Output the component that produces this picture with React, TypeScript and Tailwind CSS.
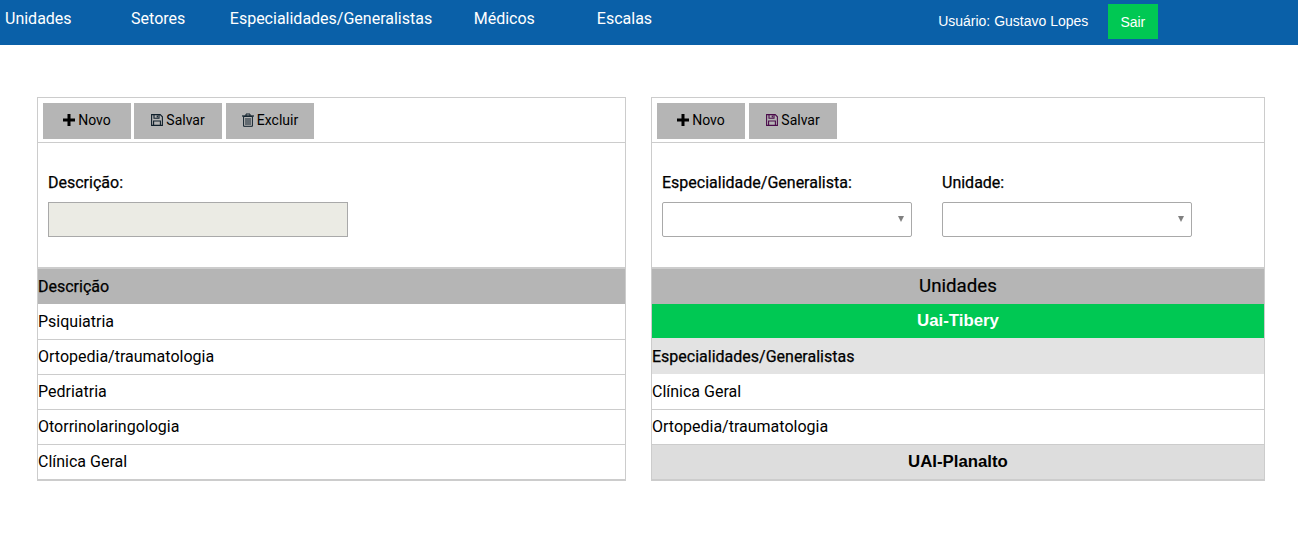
import React from "react";

const NavItem = ({ label, className }: { label: string; className: string }) => (
  <a className={`block text-base leading-[19px] text-white ${className}`}>{label}</a>
);

const PlusIcon = () => (
  <svg width="12" height="12" viewBox="0 0 12 12" fill="#000">
    <path d="M4.5 0h3v4.5H12v3H7.5V12h-3V7.5H0v-3h4.5z" />
  </svg>
);

const SaveIcon = ({ color = "#10202c" }: { color?: string }) => (
  <svg width="12" height="12" viewBox="0 0 12 12" fill="none" stroke={color} strokeWidth="1.1">
    <path d="M.6.6h8.6l2.2 2.2v8.6H.6z" />
    <path d="M3 .8v3.4h5V.8" />
    <path d="M2.6 11.2V7h6.8v4.2" />
    <path d="M6.3 1.4v2" strokeWidth="1.2" />
  </svg>
);

const TrashIcon = () => (
  <svg width="12" height="14" viewBox="0 0 12 14" fill="none" stroke="#10202c" strokeWidth="1">
    <path d="M0 3h12" strokeWidth="1.2" />
    <path d="M4 3V1h4v2" />
    <path d="M1.6 3.4v9.9h8.8V3.4z" />
    <path d="M4 5v7M6 5v7M8 5v7" />
  </svg>
);

const ToolButton = ({
  icon,
  label,
  className = "",
}: {
  icon: React.ReactNode;
  label: string;
  className?: string;
}) => (
  <button
    className={`flex h-9 w-[88px] items-center justify-center gap-[3px] bg-[#b5b5b5] pb-[2px] text-sm text-black ${className}`}
  >
    {icon}
    {label}
  </button>
);

const Row = ({ text, className = "h-[35px]" }: { text: string; className?: string }) => (
  <div className={`flex items-center border-b border-[#cccccc] text-base leading-none text-black ${className}`}>
    {text}
  </div>
);

const SelectBox = ({ label }: { label: string }) => (
  <div className="w-[250px]">
    <label className="block h-5 text-base leading-5 text-black [-webkit-text-stroke:0.25px_#000]">{label}</label>
    <div className="relative mt-[9px] h-[35px] rounded-[2px] border border-[#a9a9a9] bg-white">
      <span className="absolute top-[13px] right-[7px] h-0 w-0 border-x-[3px] border-t-[6px] border-x-transparent border-t-[#808080]" />
    </div>
  </div>
);

export default function App() {
  const especialidades = ["Ortopedia/traumatologia", "Pedriatria", "Otorrinolaringologia", "Clínica Geral"];

  return (
    <div className="h-[556px] w-[1298px] overflow-hidden bg-white font-['Roboto',sans-serif]">
      <header className="flex h-[45px] bg-[#0a60a8]">
        <nav className="flex items-start pt-[9px]">
          <NavItem label="Unidades" className="ml-[5px]" />
          <NavItem label="Setores" className="ml-[59.5px]" />
          <NavItem label="Especialidades/Generalistas" className="ml-[44.5px]" />
          <NavItem label="Médicos" className="ml-[41.5px]" />
          <NavItem label="Escalas" className="ml-[62px]" />
        </nav>
        <div className="ml-[286px] flex items-start pt-1 font-['Liberation_Sans',sans-serif] text-sm text-white">
          <span className="pt-[9px] leading-4">Usuário: Gustavo Lopes</span>
          <button className="ml-[19.5px] h-[35px] w-[50px] bg-[#00c853] text-sm text-white">Sair</button>
        </div>
      </header>

      <main className="flex items-start pt-[52px] pl-[37px]">
        <section className="h-[384px] w-[589px] border border-[#cccccc]">
          <div className="flex h-[45px] gap-[3px] border-b border-[#cccccc] pt-[5px] pl-[5px]">
            <ToolButton icon={<PlusIcon />} label="Novo" />
            <ToolButton icon={<SaveIcon />} label="Salvar" />
            <ToolButton icon={<TrashIcon />} label="Excluir" className="ml-px" />
          </div>
          <div className="h-[124px] px-[10px] pt-[30px]">
            <label className="block h-5 text-base leading-5 text-black [-webkit-text-stroke:0.25px_#000]">
              Descrição:
            </label>
            <input
              disabled
              className="mt-[9px] block h-[35px] w-[300px] border border-[#a9a9a9] bg-[#ebebe4]"
            />
          </div>
          <div className="flex h-[37px] items-center border-t-2 border-[#cccccc] bg-[#b5b5b5] text-base text-black [-webkit-text-stroke:0.25px_#000]">
            Descrição
          </div>
          <Row text="Psiquiatria" className="h-[36px] pt-px" />
          {especialidades.map((item) => (
            <Row key={item} text={item} className="h-[35px]" />
          ))}
        </section>

        <section className="ml-[25px] h-[384px] w-[614px] border border-[#cccccc]">
          <div className="flex h-[45px] gap-1 border-b border-[#cccccc] pt-[5px] pl-[5px]">
            <ToolButton icon={<PlusIcon />} label="Novo" />
            <ToolButton icon={<SaveIcon color="#4a0a4a" />} label="Salvar" />
          </div>
          <div className="flex h-[124px] gap-[30px] px-[10px] pt-[30px]">
            <SelectBox label="Especialidade/Generalista:" />
            <SelectBox label="Unidade:" />
          </div>
          <div className="flex h-[37px] items-center justify-center border-t-2 border-[#cccccc] bg-[#b5b5b5] text-[18.72px] text-black [-webkit-text-stroke:0.2px_#000]">
            Unidades
          </div>
          <div className="flex h-[34px] items-center justify-center bg-[#00c853] font-['Liberation_Sans',sans-serif] text-[16.8px] font-bold text-white">
            Uai-Tibery
          </div>
          <div className="flex h-[36px] items-center bg-[#e3e3e3] pt-[2px] text-base text-black [-webkit-text-stroke:0.25px_#000]">
            Especialidades/Generalistas
          </div>
          <Row text="Clínica Geral" className="h-[36px]" />
          <Row text="Ortopedia/traumatologia" />
          <div className="flex h-[35px] items-center justify-center border-b border-[#cccccc] bg-[#dddddd] font-['Liberation_Sans',sans-serif] text-[16.8px] font-bold text-black">
            UAI-Planalto
          </div>
        </section>
      </main>
    </div>
  );
}
